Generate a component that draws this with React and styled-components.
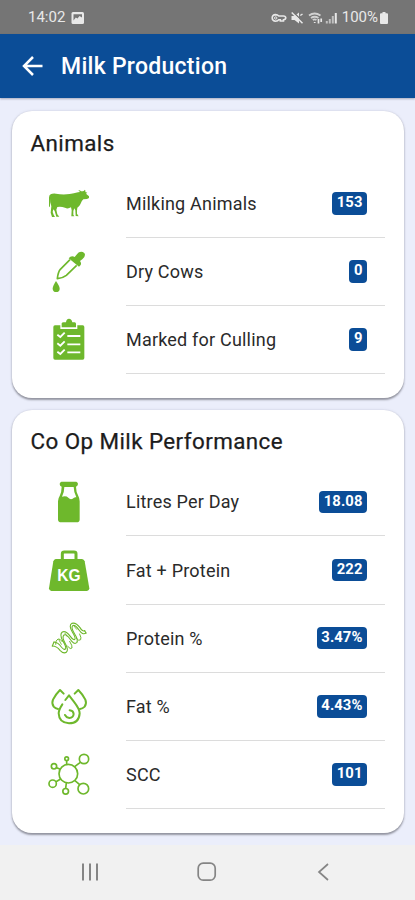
import React from 'react'
import styled, { createGlobalStyle } from 'styled-components';

const green = '#6eb82c';
const blue = '#0b4d97';

const GlobalStyle = createGlobalStyle`
    * {
        box-sizing: border-box;
    }

    body {
        margin: 0;
        background: #ebeefb;
        font-family: Roboto, "Liberation Sans", sans-serif;
    }
`;

const Screen = styled.div`
    display: flex;
    flex-direction: column;
    width: 415px;
    height: 900px;
    overflow: hidden;
    background: #ebeefb;
`;

const StatusBar = styled.div`
    display: flex;
    align-items: center;
    justify-content: space-between;
    flex: none;
    height: 33.5px;
    padding: 2px 27px 0 28px;
    background: #757575;
    color: #e8e8e8;
    font-size: 15px;
    line-height: 17px;
`;

const StatusGroup = styled.div`
    display: flex;
    align-items: center;
    gap: ${props => props.$gap || 0}px;
`;

const StatusIcons = styled.svg`
    display: block;
    width: ${props => props.$width}px;
    height: 16px;
`;

const Header = styled.header`
    display: flex;
    align-items: center;
    flex: none;
    gap: 18px;
    height: 64.5px;
    padding-left: 22px;
    background: ${blue};
    color: #fff;
    box-shadow: 0 1px 2px rgba(40, 40, 70, 0.35);
`;

const BackButton = styled.button`
    display: flex;
    padding: 0;
    border: 0;
    background: none;
    color: inherit;
`;

const HeaderTitle = styled.h1`
    margin: 0;
    padding-top: 2px;
    font-size: 23px;
    font-weight: 500;
    line-height: 30px;
    letter-spacing: 0.27px;
`;

const Content = styled.main`
    display: flex;
    flex-direction: column;
    flex: 1;
    gap: 11.3px;
    padding: 13px 11px 0 12px;
`;

const Card = styled.section`
    padding: 16.8px 19px 24px 18.5px;
    border-radius: 20px;
    background: #fff;
    box-shadow: 0 1.5px 2px rgba(50, 50, 60, 0.45), 0 0 3px rgba(90, 90, 120, 0.14);
`;

const CardTitle = styled.h2`
    margin: 0 0 11.9px;
    color: #1c1c1c;
    font-size: 22.4px;
    font-weight: 400;
    line-height: 30px;
    letter-spacing: 0.42px;
    -webkit-text-stroke: 0.25px #1c1c1c;
`;

const Row = styled.div`
    display: flex;
    align-items: center;
    height: 68.2px;
    padding-left: 16.5px;
`;

const RowIcon = styled.svg`
    display: block;
    flex: none;
    width: 44px;
    height: 44px;
    margin: 0 35px 1.8px 0;
`;

const RowBody = styled.div`
    display: flex;
    align-items: center;
    justify-content: space-between;
    flex: 1;
    height: 100%;
    padding-right: 18px;
    border-bottom: 1px solid #dcdcdc;
`;

const Label = styled.span`
    padding-top: 1px;
    color: #2a2a2a;
    font-size: 18px;
    line-height: 24px;
    letter-spacing: 0.2px;
`;

const Badge = styled.span`
    height: 22.5px;
    padding: 0 4.5px;
    border-radius: 4px;
    background: ${blue};
    color: #fff;
    font-size: 14.8px;
    font-weight: 700;
    line-height: 21.5px;
    letter-spacing: 0.1px;
`;

const NavBar = styled.nav`
    display: flex;
    align-items: center;
    justify-content: space-between;
    flex: none;
    height: 55px;
    padding: 0 82px 1.5px 80px;
    background: #f1f1f1;
`;

const NavIcon = styled.svg`
    display: block;
    width: 20px;
    height: 20px;
    fill: none;
    stroke: #858585;
    stroke-width: 1.7;
`;

const CowIcon = () => (
    <RowIcon viewBox="51 33 132 132" fill={green}>
        <path d="M62 73 Q67 70 78 71 Q98 75 119 72 Q132 70 144 67 L150 66 L145 61 Q150 60 153 64 L159 64 Q163 63 164 59 Q168 61 166 66 L172 68 L168 71 L177 79 L177 84 L171 87 L160 88 Q154 93 151 103 Q149 109 142 113 L141 122 L141 131 L146 139 L137 138 L136 121 L133 115 L130 123 L130 134 L133 139 L124 139 L125 121 L123 112 Q113 118 105 113 Q93 109 82 111 L79 119 L82 133 L88 140 L79 140 L74 123 L70 118 L68 126 L71 134 L75 141 L66 141 L62 128 L64 109 L61 97 L61 86 L60 109 L57 112 L57 83 Q57 75 62 73Z" />
    </RowIcon>
);

const DropperIcon = () => (
    <RowIcon viewBox="51 27 132 132" fill={green}>
        <path d="M139 45 Q145 35 154 35 Q164 36 165 44 Q165 51 157 58 L150 63 Q155 69 152 75 L147 80 L116 55 L121 50 Q128 47 134 51Z" />
        <path d="M120 59 L91 88 Q84 97 82 116 Q99 114 109 106 L140 76" fill="none" stroke={green} strokeWidth="5" strokeLinejoin="round" />
        <path d="M78 123 Q68 138 68 146 Q69 156 78 156 Q89 156 89 146 Q89 139 78 123Z" />
    </RowIcon>
);

const ClipboardIcon = () => (
    <RowIcon viewBox="51 232 132 132">
        <rect x="70" y="257" width="93" height="103" rx="5" fill={green} />
        <path d="M91 254 H142 V268 H91Z" fill="#fff" />
        <path d="M95 263 V251 Q96 248 101 248 H108 Q109 237 117 237 Q125 237 127 248 H134 Q138 249 138 252 V263Z" fill={green} />
        <g fill="none" stroke="#fff" strokeWidth="5.5">
            <path d="M82 285 L91 292 L104 279 M82 311 L91 318 L104 305 M82 336 L91 343 L104 330" />
            <path d="M112 289 H151 M112 314 H151 M112 338 H151" />
        </g>
    </RowIcon>
);

const BottleIcon = () => (
    <RowIcon viewBox="51 28 132 132">
        <path d="M94 36 H139 Q144 38 144 43 Q143 49 138 51 Q138 66 145 79 Q149 86 149 95 V150 Q148 158 140 158 H94 Q85 158 84 150 V95 Q84 86 89 79 Q95 66 95 51 Q89 49 89 43 Q89 38 94 36Z" fill={green} />
        <path d="M103 52 H131 Q131 66 139 83 Q133 81 128 87 Q121 91 115 84 Q109 78 96 81 Q103 67 103 52Z" fill="#fff" />
    </RowIcon>
);

const WeightText = styled.text`
    fill: #fff;
    font-family: "Liberation Sans", sans-serif;
    font-size: 50px;
    font-weight: 700;
`;

const WeightIcon = () => (
    <RowIcon viewBox="51 233 132 132">
        <path d="M97 268 V250 Q97 245 103 245 H132 Q138 245 138 250 V268" fill="none" stroke={green} strokeWidth="9" />
        <path d="M77 266 H156 Q162 267 164 273 L178 354 Q178 361 171 362 H64 Q57 361 57 354 L70 273 Q72 267 77 266Z" fill={green} />
        <WeightText x="82" y="332" textLength="70" lengthAdjust="spacingAndGlyphs">KG</WeightText>
    </RowIcon>
);

const ProteinIcon = () => (
    <RowIcon viewBox="51 32 132 132" fill="none" stroke={green} strokeWidth="3.4" strokeLinecap="round" strokeLinejoin="round">
        {/* front strand */}
        <path d="M67 122 Q80 122 90 135 Q100 146 109 141 Q117 134 105 113 Q95 95 102 89 Q109 85 120 101 Q132 119 140 112 Q146 105 134 86 Q122 67 128 61 Q135 57 147 74 Q158 90 168 83" />
        <path d="M72 110 Q84 111 94 125 Q103 136 107 130 Q109 124 98 106 Q88 87 97 80 Q107 75 121 93 Q131 107 135 101 Q137 96 127 80 Q115 60 126 54 Q138 51 150 67 Q158 80 164 76" />
        <path d="M67 122 L72 110 M168 83 L164 76" />
        {/* back strand */}
        <path d="M77 117 Q76 105 84 101 Q90 99 97 109 M113 123 Q122 134 126 128 Q128 122 119 108 M139 99 Q147 109 152 103 Q155 98 149 86" strokeWidth="3" />
        <path d="M87 104 L94 117 M105 84 L112 94 M132 62 L140 72" strokeWidth="2.5" />
    </RowIcon>
);

const FatIcon = () => (
    <RowIcon viewBox="51 42 132 132" fill="none" stroke={green} strokeWidth="6" strokeLinecap="round" strokeLinejoin="round">
        <path d="M106 90 L117 76 L131 94 Q149 117 149 130 Q147 160 117 160 Q87 159 86 130 Q86 120 97 103" />
        <path d="M101 71 L90 60 Q77 73 69 89 Q64 100 71 110 Q76 116 84 117" />
        <path d="M134 71 L145 60 Q158 73 166 89 Q171 100 164 110 Q158 116 150 117" />
        <path d="M119 121 Q130 122 131 132 Q130 143 118 144 Q109 143 105 135" />
    </RowIcon>
);

const SccIcon = () => (
    <RowIcon viewBox="51 247 132 132" fill="none" stroke={green} strokeWidth="5">
        <circle cx="115" cy="312" r="28" />
        <circle cx="110" cy="267" r="5.5" />
        <circle cx="72" cy="290" r="8" />
        <circle cx="162" cy="268" r="14" />
        <circle cx="68" cy="342" r="11" />
        <circle cx="107" cy="365" r="8.5" />
        <circle cx="160" cy="357" r="16" />
        <path d="M110 273 V284 M80 294 L91 299 M134 291 L151 278 M92 328 L78 336 M109 340 L107 356 M134 332 L149 345" />
    </RowIcon>
);

const animals = [
    { name: 'Milking Animals', value: '153', icon: CowIcon },
    { name: 'Dry Cows', value: '0', icon: DropperIcon },
    { name: 'Marked for Culling', value: '9', icon: ClipboardIcon },
];

const performance = [
    { name: 'Litres Per Day', value: '18.08', icon: BottleIcon },
    { name: 'Fat + Protein', value: '222', icon: WeightIcon },
    { name: 'Protein %', value: '3.47%', icon: ProteinIcon },
    { name: 'Fat %', value: '4.43%', icon: FatIcon },
    { name: 'SCC', value: '101', icon: SccIcon },
];

const StatCard = ({ title, rows }) => (
    <Card>
        <CardTitle>{title}</CardTitle>
        {rows.map(({ name, value, icon: Icon }) => (
            <Row key={name}>
                <Icon />
                <RowBody>
                    <Label>{name}</Label>
                    <Badge>{value}</Badge>
                </RowBody>
            </Row>
        ))}
    </Card>
);

const App = () => {
    return (
        <>
            <GlobalStyle />
            <Screen>
                <StatusBar>
                    <StatusGroup $gap={6}>
                        <span>14:02</span>
                        <StatusIcons $width={14} viewBox="0 0 14 16">
                            <rect x="0.5" y="2" width="12.5" height="12" rx="1.5" fill="#e8e8e8" />
                            <path d="M2.5 10.5 V4.2 H11 V7.5 L8.5 6 L6.5 8.5 L4.8 7.5Z" fill="#757575" />
                        </StatusIcons>
                    </StatusGroup>
                    <StatusGroup $gap={4}>
                        {/* vpn key, mute, wifi, signal */}
                        <StatusIcons $width={67} viewBox="0 0 67 16" fill="none" stroke="#e8e8e8">
                            <path d="M7.8 6 Q6.5 4.6 4.6 4.6 Q1.2 4.8 1.2 8 Q1.3 11 4.6 11.3 Q7 11.2 7.8 9.7 H9.3 V11 H12.5 V9.7 Q14.8 9.5 14.8 7.8 Q14.6 6 12.5 6Z" strokeWidth="1.6" />
                            <circle cx="4.7" cy="8" r="1.2" strokeWidth="1" />
                            <path d="M20.5 6 H23.5 L28 2.5 V13.5 L23.5 10 H20.5Z" fill="#e8e8e8" stroke="none" />
                            <path d="M21.5 1.5 L33 12.5" stroke="#757575" strokeWidth="1.4" />
                            <path d="M20.7 2.5 L31.5 13.3 M29.3 5.5 L31.5 4" strokeWidth="1.5" />
                            <path d="M38 5.5 Q43.5 1.5 49.5 5.5 M40 8 Q43.6 5.5 47.5 8 M41.8 10 Q43.6 8.8 45.5 10" strokeWidth="1.8" opacity="0.8" />
                            <path d="M43.7 12 V13 M47.5 9 V13.5 M50.2 8.5 V12" strokeWidth="1.7" />
                            <path d="M55.8 11 V13.5 M58.8 9 V13.5 M61.8 6 V13.5" strokeWidth="2" opacity="0.65" />
                            <path d="M64.8 3 V13.5" strokeWidth="2" />
                        </StatusIcons>
                        <StatusGroup $gap={2}>
                            <span>100%</span>
                            <StatusIcons $width={8} viewBox="0 0 8 16" fill="#e8e8e8">
                                <path d="M2.5 2 H5.5 V3.3 H7 Q8 3.3 8 4.3 V13 Q8 14 7 14 H1 Q0 14 0 13 V4.3 Q0 3.3 1 3.3 H2.5Z" />
                            </StatusIcons>
                        </StatusGroup>
                    </StatusGroup>
                </StatusBar>
                <Header>
                    <BackButton aria-label="Back">
                        <svg width="21" height="20" viewBox="0 0 21 20" fill="none" stroke="currentColor" strokeWidth="2.5">
                            <path d="M20.5 10 H2.5 M11 1 L2 10 L11 19" />
                        </svg>
                    </BackButton>
                    <HeaderTitle>Milk Production</HeaderTitle>
                </Header>
                <Content>
                    <StatCard title="Animals" rows={animals} />
                    <StatCard title="Co Op Milk Performance" rows={performance} />
                </Content>
                <NavBar>
                    <NavIcon viewBox="0 0 20 20">
                        <path d="M3 1.5 V18.5 M10 1.5 V18.5 M17 1.5 V18.5" strokeWidth="2" />
                    </NavIcon>
                    <NavIcon viewBox="0 0 20 20">
                        <rect x="1.2" y="1.2" width="17" height="17" rx="5" />
                    </NavIcon>
                    <NavIcon viewBox="0 0 20 20">
                        <path d="M15 2 L6 10 L15 18" />
                    </NavIcon>
                </NavBar>
            </Screen>
        </>
    )
}

export default App
